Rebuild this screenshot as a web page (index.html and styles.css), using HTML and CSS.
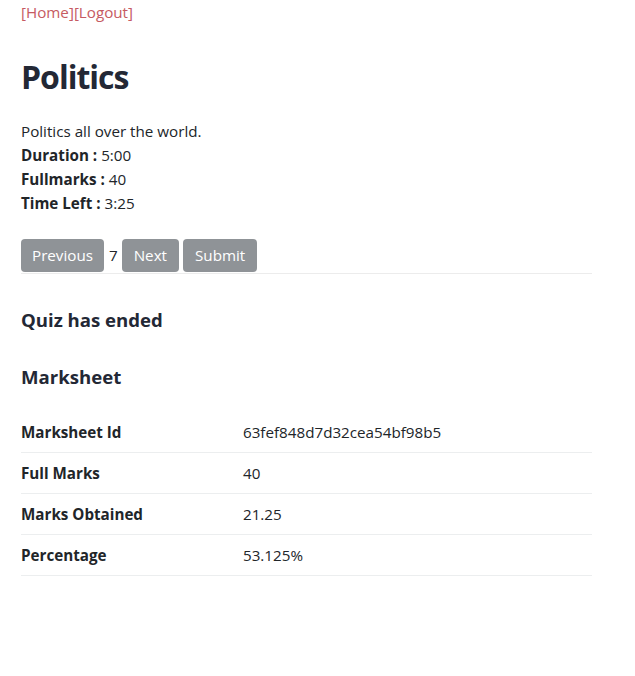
FILE: index.html
```html
<!DOCTYPE html>
<html lang="en">
<head>
<meta charset="utf-8">
<title>Politics</title>
<link rel="stylesheet" href="styles.css">
</head>
<body>
<div class="container">
  <nav class="topnav"><a href="#">[Home]</a><a href="#">[Logout]</a></nav>
  <h1 class="title">Politics</h1>
  <div class="info">
    <div>Politics all over the world.</div>
    <div><b>Duration :</b> 5:00</div>
    <div><b>Fullmarks :</b> 40</div>
    <div><b>Time Left :</b> 3:25</div>
  </div>
  <div class="controls">
    <button class="btn" disabled>Previous</button>
    <span class="qnum">7</span>
    <button class="btn" disabled>Next</button>
    <button class="btn" disabled>Submit</button>
  </div>
  <h4 class="subhead first">Quiz has ended</h4>
  <h4 class="subhead">Marksheet</h4>
  <table class="marks">
    <tr><th>Marksheet Id</th><td>63fef848d7d32cea54bf98b5</td></tr>
    <tr><th>Full Marks</th><td>40</td></tr>
    <tr><th>Marks Obtained</th><td>21.25</td></tr>
    <tr><th>Percentage</th><td>53.125%</td></tr>
  </table>
</div>
</body>
</html>
```
FILE: styles.css
```css
html, body {
  margin: 0;
  padding: 0;
  background: #fff;
}
body {
  font-family: "Open Sans", "Noto Sans", sans-serif;
  font-size: 15.2px;
  line-height: 24px;
  color: #212529;
}
.container {
  width: 571px;
  padding-left: 21px;
}
.topnav {
  height: 24px;
  line-height: 24px;
}
.topnav a {
  color: #c65a62;
  text-decoration: none;
}
.title {
  margin: 29px 0 18px;
  font-size: 32px;
  line-height: 48px;
  font-weight: 700;
  letter-spacing: -1px;
  color: #232835;
}
.info div {
  height: 24px;
}
.info b {
  font-weight: 700;
}
.controls {
  margin-top: 24px;
  display: flex;
  align-items: flex-start;
  border-bottom: 1px solid #ececec;
  height: 34px;
}
.btn {
  font-family: inherit;
  font-size: 15.2px;
  line-height: 21px;
  height: 33px;
  padding: 6px 12px;
  border: none;
  border-radius: 4px;
  background: #8f9397;
  color: #fff;
  margin-right: 4px;
}
.btn:first-child {
  padding: 6px 11px;
}
.qnum {
  margin: 0 4px 0 1px;
  line-height: 33px;
}
.subhead {
  margin: 0;
  font-size: 18.6px;
  line-height: 28px;
  font-weight: 700;
  color: #232835;
}
.subhead.first {
  margin-top: 32px;
}
.subhead + .subhead {
  margin-top: 29px;
}
.marks {
  margin-top: 21px;
  width: 571px;
  border-collapse: collapse;
}
.marks th, .marks td {
  text-align: left;
  padding: 0;
  height: 40px;
  border-bottom: 1px solid #eceeef;
  vertical-align: middle;
}
.marks th {
  width: 222px;
  font-weight: 700;
}
```
